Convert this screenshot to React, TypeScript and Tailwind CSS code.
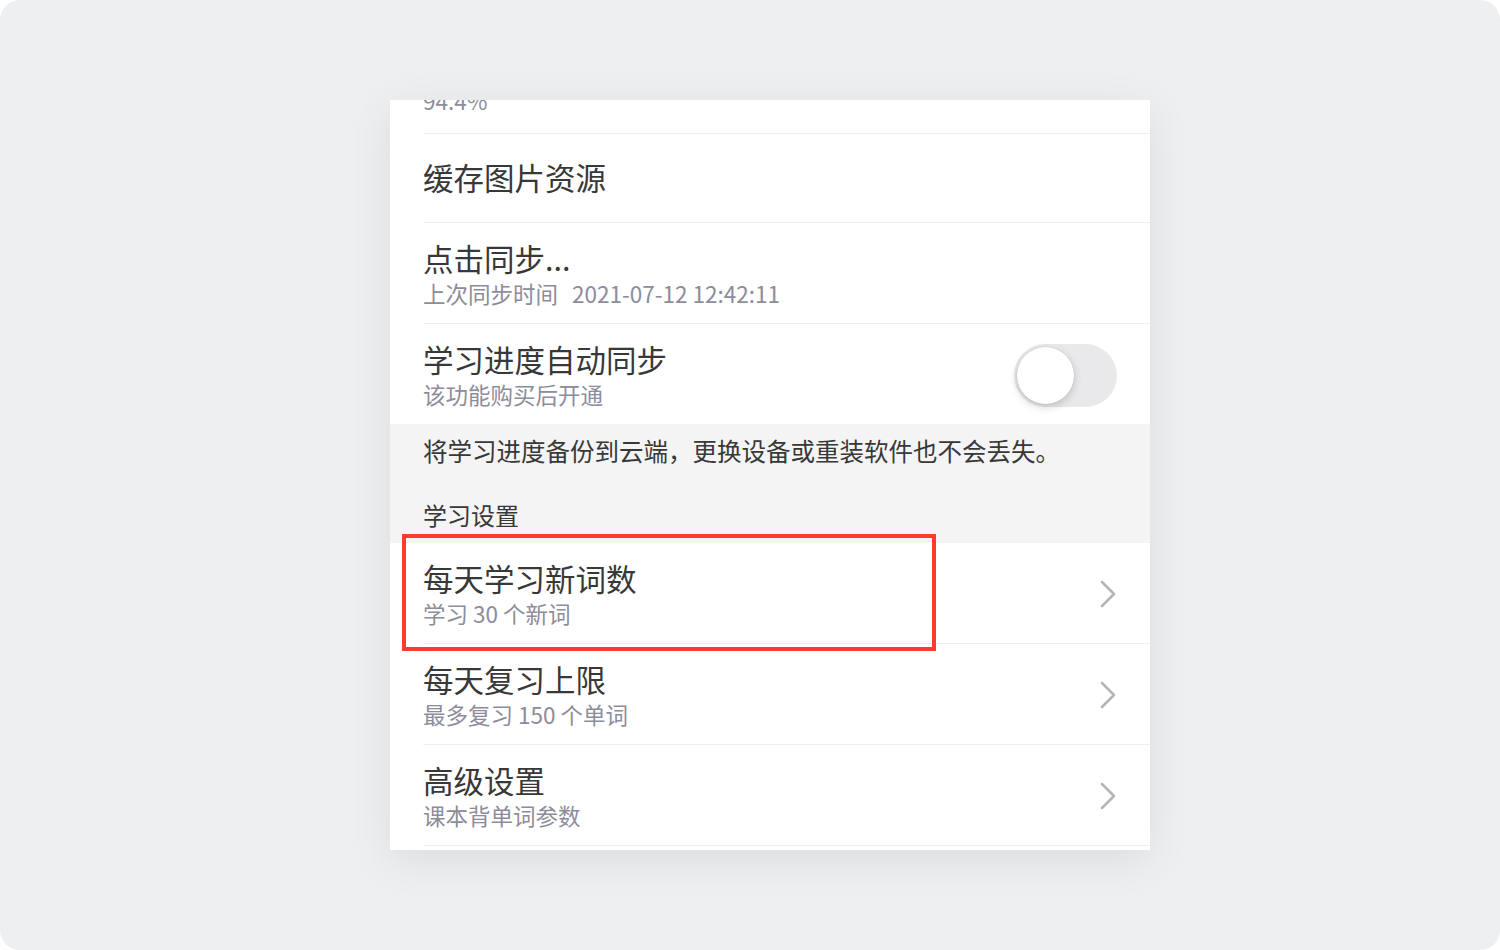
import { useState } from 'react';

const font = "font-['Noto_Sans_CJK_SC','Noto_Sans',sans-serif]";

function Chevron() {
  return (
    <svg width="16" height="28" viewBox="0 0 16 28" fill="none" className="mr-[1px]">
      <polyline
        points="2,2 14,14 2,26"
        stroke="#b5b5b5"
        strokeWidth="2.6"
        strokeLinecap="round"
        strokeLinejoin="round"
      />
    </svg>
  );
}

function Row({
  title,
  sub,
  right,
  divider = true,
}: {
  title: string;
  sub?: React.ReactNode;
  right?: React.ReactNode;
  divider?: boolean;
}) {
  return (
    <div className="flex items-center pl-[33px]">
      <div
        className={`flex flex-1 items-center pr-[33px] pt-[16px] pb-[14px] ${
          divider ? 'border-b border-[#efeff1]' : ''
        }`}
      >
        <div className="flex-1">
          <div className="text-[30.5px] leading-[38px] text-[#383838]">{title}</div>
          {sub && <div className="text-[22.5px] leading-[32px] text-[#8d8c9a]">{sub}</div>}
        </div>
        {right}
      </div>
    </div>
  );
}

function Toggle() {
  const [on, setOn] = useState(false);
  return (
    <button
      onClick={() => setOn(!on)}
      className={`relative h-[63px] w-[103px] rounded-full transition-colors ${
        on ? 'bg-[#34c759]' : 'bg-[#e9e9eb]'
      }`}
    >
      <span
        className={`absolute top-[3px] h-[57px] w-[57px] rounded-full bg-white shadow-[0_3px_8px_rgba(0,0,0,0.18),0_0_1px_rgba(0,0,0,0.2)] transition-all ${
          on ? 'left-[43px]' : 'left-[3px]'
        }`}
      />
    </button>
  );
}

export default function App() {
  return (
    <div className={`h-[950px] w-[1500px] bg-white ${font}`}>
      <div className="flex h-full w-full justify-center rounded-[20px] bg-[#eeeff1] pt-[100px] pl-[40px]">
        <div className="h-[750px] w-[760px] overflow-hidden bg-white shadow-[0_10px_40px_rgba(0,0,0,0.08)]">
          <div className="ml-[33px] flex h-[34px] items-start border-b border-[#efeff1]">
            <div className="-mt-[14px] text-[22.5px] leading-[28px] text-[#8d8c9a]">94.4%</div>
          </div>

          <div className="pl-[33px]">
            <div className="flex h-[89px] items-center border-b border-[#efeff1] text-[30.5px] text-[#383838]">
              缓存图片资源
            </div>
          </div>

          <Row
            title="点击同步..."
            sub={
              <>
                上次同步时间<span className="ml-[14px]">2021-07-12 12:42:11</span>
              </>
            }
          />
          <Row title="学习进度自动同步" sub="该功能购买后开通" right={<Toggle />} divider={false} />

          <div className="bg-[#f4f4f4] px-[33px] pt-[12px] pb-[13px]">
            <div className="text-[24.5px] leading-[30px] text-[#383838]">
              将学习进度备份到云端，更换设备或重装软件也不会丢失。
            </div>
            <div className="mt-[34px] text-[24px] leading-[30px] text-[#383838]">学习设置</div>
          </div>

          <div className="relative">
            <div className="pointer-events-none absolute -top-[9px] left-[12px] h-[117px] w-[534px] border-[4px] border-[#ff3b30]" />
            <Row title="每天学习新词数" sub="学习 30 个新词" right={<Chevron />} />
          </div>
          <Row title="每天复习上限" sub="最多复习 150 个单词" right={<Chevron />} />
          <Row title="高级设置" sub="课本背单词参数" right={<Chevron />} />
        </div>
      </div>
    </div>
  );
}
